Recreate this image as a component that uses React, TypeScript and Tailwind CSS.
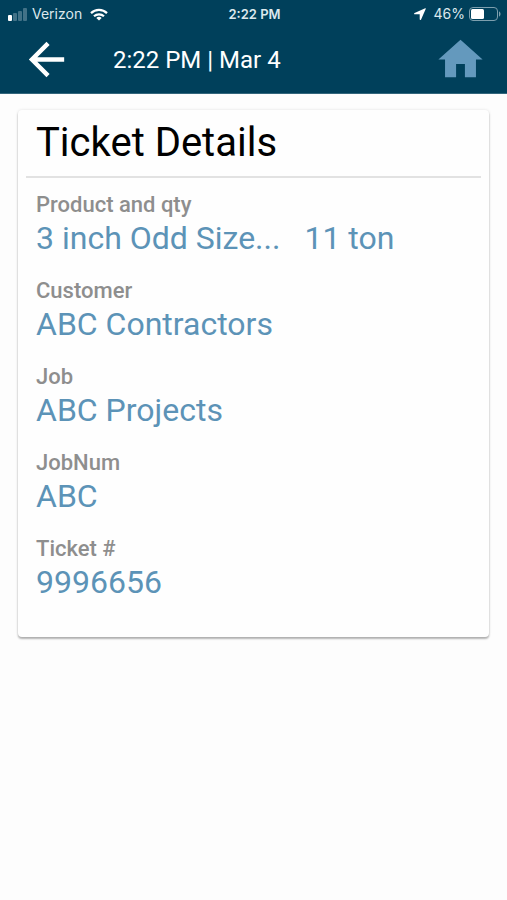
import { MdArrowBack, MdHome } from 'react-icons/md';

interface TicketField {
  label: string;
  values: string[];
}

const TICKET_FIELDS: TicketField[] = [
  { label: 'Product and qty', values: ['3 inch Odd Size...', '11 ton'] },
  { label: 'Customer', values: ['ABC Contractors'] },
  { label: 'Job', values: ['ABC Projects'] },
  { label: 'JobNum', values: ['ABC'] },
  { label: 'Ticket #', values: ['9996656'] },
];

export default function App() {
  return (
    <div className="min-h-screen bg-[#fdfdfd] font-['Roboto',sans-serif]">
      <header className="bg-[#00405b] text-white border-b border-[#33667c]">
        <StatusBar />
        <NavBar />
      </header>
      <main className="px-[18px] py-4">
        <TicketCard />
      </main>
    </div>
  );
}

function StatusBar() {
  return (
    <div className="grid grid-cols-3 items-center h-7 pl-2 pr-[6px] font-['Inter',sans-serif] text-sm text-[#dce8ed]">
      <div className="flex items-center gap-1">
        <SignalIcon />
        <span>Verizon</span>
        <WifiIcon />
      </div>
      <span className="text-center text-[13px] font-semibold whitespace-nowrap">2:22 PM</span>
      <div className="flex items-center justify-end gap-1">
        <LocationIcon />
        <span className="ml-1">46%</span>
        <BatteryIcon />
      </div>
    </div>
  );
}

function NavBar() {
  return (
    <nav className="flex items-center h-[65px] px-5 pb-[2px]">
      <button type="button" aria-label="Back">
        <MdArrowBack className="size-[53px]" />
      </button>
      <span className="ml-10 text-2xl">2:22 PM | Mar 4</span>
      <button type="button" aria-label="Home" className="ml-auto text-[#6499bd]">
        <MdHome className="size-[53px]" />
      </button>
    </nav>
  );
}

function TicketCard() {
  return (
    <section className="rounded-sm bg-[#fefefe] px-2 pb-9 shadow-[0_2px_2px_rgba(0,0,0,0.28),0_0_3px_rgba(0,0,0,0.12)]">
      <h1 className="px-[10px] text-[40px] leading-[66px] text-black border-b-2 border-[#e2e2e2]">
        Ticket Details
      </h1>
      <dl className="flex flex-col gap-5 px-[10px] pt-[13px]">
        {TICKET_FIELDS.map(field => (
          <div key={field.label}>
            <dt className="text-[22px] leading-7 font-medium text-[#8e8e8e]">{field.label}</dt>
            <dd className="flex gap-6 text-[32px] leading-[38px] text-[#5c93b7]">
              {field.values.map(value => (
                <span key={value}>{value}</span>
              ))}
            </dd>
          </div>
        ))}
      </dl>
    </section>
  );
}

function SignalIcon() {
  return (
    <svg viewBox="0 0 20 13" className="w-5 h-[13px]" fill="currentColor">
      <rect x="0" y="7" width="4" height="6" rx="1" fill="#fff" />
      <rect x="5" y="5" width="4" height="8" rx="1" opacity="0.3" />
      <rect x="10" y="3" width="4" height="10" rx="1" opacity="0.3" />
      <rect x="15" y="0" width="4" height="13" rx="1" opacity="0.3" />
    </svg>
  );
}

function WifiIcon() {
  return (
    <svg viewBox="0 0 18 13" className="ml-1 w-[18px] h-[13px]" fill="none" stroke="#fff" strokeWidth="2.2">
      <path d="M1 5.1a11.4 11.4 0 0 1 16 0" />
      <path d="M4 8.3a7.2 7.2 0 0 1 10 0" />
      <path d="M9 12.6 6.3 10a3.9 3.9 0 0 1 5.4 0z" fill="#fff" stroke="none" />
    </svg>
  );
}

function LocationIcon() {
  return (
    <svg viewBox="0 0 12 12" className="size-3" fill="#fff">
      <path d="M11.2.2.6 4.9c-.8.4-.6 1.4.2 1.4h4.9v4.9c0 .8 1 1 1.4.2L11.8.8c.2-.4-.2-.8-.6-.6z" />
    </svg>
  );
}

function BatteryIcon() {
  return (
    <svg viewBox="0 0 32 14" className="w-8 h-[14px]" fill="none">
      <rect x="0.5" y="0.5" width="28" height="13" rx="3.5" stroke="#7d9fae" />
      <rect x="2" y="2" width="13" height="10" rx="1.5" fill="#fff" />
      <path d="M30 4.5c2 .6 2 4.4 0 5z" fill="#7d9fae" />
    </svg>
  );
}
